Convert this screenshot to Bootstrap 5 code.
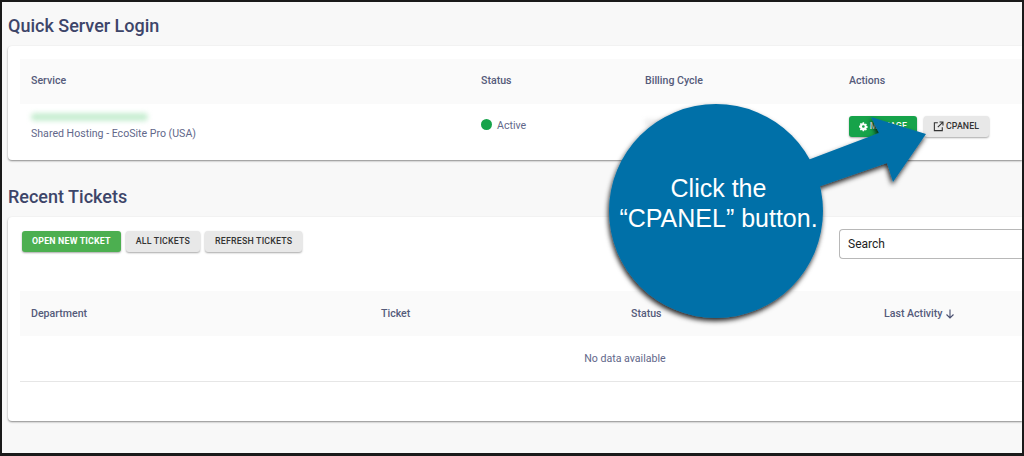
<!DOCTYPE html>
<html lang="en">
<head>
<meta charset="utf-8">
<title>Quick Server Login</title>
<link href="https://cdn.jsdelivr.net/npm/bootstrap@5.3.0/dist/css/bootstrap.min.css" rel="stylesheet">
<style>
html,body{height:100%;margin:0;overflow:hidden}
body{background:#f8f8f8;font-family:Roboto,"Liberation Sans",sans-serif;color:#4a5070}
.frame{position:relative;width:1024px;height:456px;border:solid #1a1a1a;border-width:2px 2px 3px 2px;overflow:hidden;padding-left:6px}
.sec-title{font-size:18px;font-weight:500;color:#3d4569;margin:0;line-height:22px}
.t1{padding-top:13px;margin-bottom:9px}
.t2{margin-top:26px;margin-bottom:9px}
.sheet{background:#fff;border:0;border-radius:4px 0 0 4px;box-shadow:0 1px 2px rgba(0,0,0,.45);padding:13px 0 0 12px}
.s1{height:114px}
.s2{height:204px;padding-top:14px}
.grid-t{width:100%;table-layout:fixed;margin:0;font-size:10.6px;--bs-table-bg:transparent}
.grid-t th{background:#fafafa;font-weight:500;color:#555b7a;height:45px;vertical-align:middle;padding:0 0 0 11px;border:0}
.s1 .grid-t th{padding-bottom:2px}
.grid-t td{padding:0 0 0 11px;border:0;color:#62678a;vertical-align:top}
.row-svc td{height:56px}
.grid-t .cell-svc{padding-top:9px}
.grid-t .cell-state{padding-top:14px}
.grid-t .cell-bill{padding-top:15px}
.grid-t .cell-act{padding-top:12px}
.blur-mail{display:block;width:117px;height:8px;background:#c8eed2;border-radius:4px;filter:blur(2.5px);margin-bottom:5px}
.blur-bill{display:block;width:36px;height:8px;background:#efefef;filter:blur(2px)}
.dot{display:inline-block;width:11px;height:11px;border-radius:50%;background:#16a34a;margin-right:5px;vertical-align:-1px}
.act{font-size:8.8px;font-weight:500;height:21px;border:0;border-radius:3px;padding:0 10px;display:inline-flex;align-items:center;gap:2px;letter-spacing:.1px;box-shadow:0 1px 2px rgba(0,0,0,.35);text-transform:uppercase;line-height:1}
.act-green{background:#16a34a;color:#fff;width:68px}
.act-light{background:#e8e8e8;color:#333}
.act-cp{width:65px;padding:0 9px}
.act-new{background:#4caf50;color:#fff;font-weight:700}
.act-pair{gap:7px}
.tool{display:flex;align-items:flex-start;gap:5px;height:60px;padding-left:2px}
.tool .act{letter-spacing:.2px}
.search-in{margin-left:auto;width:183px;height:30px;margin-top:-2px;font-size:12px;color:#222;border:1px solid #b8b8b8;border-right:0;border-radius:4px 0 0 4px;padding:0 8px;background:#fff;display:flex;align-items:center}
.grid-t .nodata-cell{height:45px;text-align:center;vertical-align:middle;border-bottom:1px solid #e6e6e6;padding:1px 0 0 208px}
.callout{position:absolute;left:0;top:0;pointer-events:none}
.callout-text{position:absolute;left:605px;top:171px;width:223px;text-align:center;color:#fff;font-family:"Liberation Sans",sans-serif;font-size:25px;line-height:30px}
</style>
</head>
<body>
<div class="frame">
  <h2 class="sec-title t1">Quick Server Login</h2>
  <div class="card sheet s1">
    <table class="table grid-t">
      <colgroup><col style="width:450px"><col style="width:164px"><col style="width:204px"><col></colgroup>
      <thead><tr><th>Service</th><th>Status</th><th>Billing Cycle</th><th>Actions</th></tr></thead>
      <tbody>
        <tr class="row-svc">
          <td class="cell-svc"><span class="blur-mail"></span>Shared Hosting - EcoSite Pro (USA)</td>
          <td class="cell-state"><span class="dot"></span>Active</td>
          <td class="cell-bill"><span class="blur-bill"></span></td>
          <td class="cell-act">
            <div class="d-flex act-pair">
              <button class="btn act act-green"><svg width="11" height="11" viewBox="0 0 16 16" fill="#fff"><path d="M9.4 1l.3 1.9 1.3.6 1.6-1.1 1.9 2-1.1 1.6.5 1.3 1.9.3v2.8l-1.9.3-.5 1.3 1.1 1.6-2 1.9-1.6-1.1-1.2.5-.4 1.9H6.6l-.3-1.9-1.3-.5-1.6 1.1-1.9-2 1.1-1.6-.6-1.2L0 9.4V6.6l1.9-.3.6-1.3-1.1-1.6 2-1.9L5 2.6l1.3-.6L6.6 0h2.8zM8 5.5a2.5 2.5 0 100 5 2.5 2.5 0 000-5z"/></svg>Manage</button>
              <button class="btn act act-light act-cp"><svg width="11" height="11" viewBox="0 0 16 16" fill="none" stroke="#333" stroke-width="1.6"><path d="M7 2.500H2v11.500h11.500V9M9.500 1.500h5v5M14.500 1.500L7 9"/></svg>cPanel</button>
            </div>
          </td>
        </tr>
      </tbody>
    </table>
  </div>
  <h2 class="sec-title t2">Recent Tickets</h2>
  <div class="card sheet s2">
    <div class="tool">
      <button class="btn act act-new">Open New Ticket</button>
      <button class="btn act act-light">All Tickets</button>
      <button class="btn act act-light">Refresh Tickets</button>
      <div class="search-in">Search</div>
    </div>
    <table class="table grid-t">
      <colgroup><col style="width:350px"><col style="width:250px"><col style="width:253px"><col></colgroup>
      <thead><tr><th>Department</th><th>Ticket</th><th>Status</th><th>Last Activity <svg width="10" height="10" viewBox="0 0 10 10" fill="none" stroke="#4a5070" stroke-width="1.100"><path d="M5 .5v8.500M1.500 5.500L5 9l3.500-3.500"/></svg></th></tr></thead>
      <tbody><tr><td class="nodata-cell" colspan="4">No data available</td></tr></tbody>
    </table>
  </div>
  <svg class="callout" width="1024" height="456" viewBox="0 0 1024 456">
    <defs><filter id="shade" x="-20%" y="-20%" width="140%" height="140%"><feDropShadow dx="-1" dy="3" stdDeviation="2.500" flood-color="#000" flood-opacity=".85"/></filter></defs>
    <g fill="#0070a8" filter="url(#shade)" transform="translate(-2 -2)">
      <circle cx="716" cy="211" r="107"/>
      <polygon points="800,163 879,133 871,117 926,134 893,182 887,163 815,188"/>
    </g>
  </svg>
  <div class="callout-text">Click the<br>“CPANEL” button.</div>
</div>
</body>
</html>
